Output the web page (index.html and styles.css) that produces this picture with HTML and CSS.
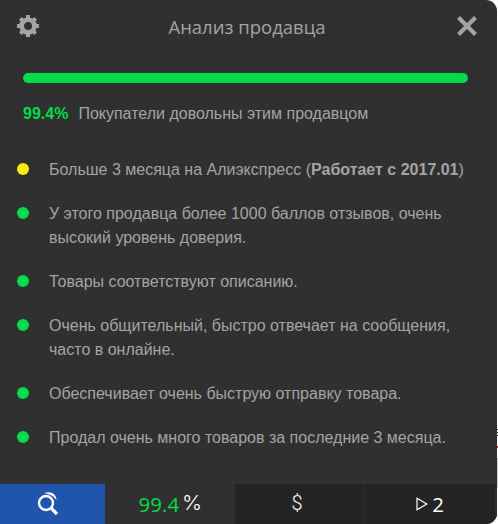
FILE: index.html
```html
<!DOCTYPE html>
<html lang="ru">
<head>
    <meta charset="UTF-8">
    <meta name="viewport" content="width=device-width, initial-scale=1.0">
    <title>Анализ продавца</title>
    <link rel="stylesheet" href="styles.css">
</head>
<body>
    <div class="popup">
        <div class="header">
            <svg class="icon-gear" viewBox="0 0 22 22">
                <circle cx="11" cy="11" r="6.4" fill="none" stroke="currentColor" stroke-width="4.8"/>
                <path d="M9 0h4v4H9zM9 18h4v4H9zM0 9h4v4H0zM18 9h4v4h-4z"/>
                <path d="M9 .2h4v4H9zM9 17.8h4v4H9zM.2 9h4v4h-4zM17.8 9h4v4h-4z" transform="rotate(45 11 11)"/>
            </svg>
            <h1>Анализ продавца</h1>
            <svg class="icon-close" viewBox="0 0 20 20"><path d="M1.5 1.5l17 17M18.5 1.5l-17 17"/></svg>
        </div>
        <div class="content">
            <div class="progress"></div>
            <p class="rating"><b>99.4%</b><span>Покупатели довольны этим продавцом</span></p>
            <ul class="list">
                <li class="warn">Больше 3 месяца на Алиэкспресс (<b>Работает с 2017.01</b>)</li>
                <li>У этого продавца более 1000 баллов отзывов, очень высокий уровень доверия.</li>
                <li>Товары соответствуют описанию.</li>
                <li>Очень общительный, быстро отвечает на сообщения, часто в онлайне.</li>
                <li>Обеспечивает очень быструю отправку товара.</li>
                <li>Продал очень много товаров за последние 3 месяца.</li>
            </ul>
        </div>
        <div class="tabs">
            <div class="tab tab-search">
                <svg class="icon-search" viewBox="0 0 22 26">
                    <circle cx="9" cy="12" r="7" stroke-width="2.4"/>
                    <path d="M14 17l6 6" stroke-width="3.2"/>
                    <path class="shine" d="M7 2.3C13-.4 19.3 2.5 19.5 9.3 16.8 5 13 3 7 2.3z"/>
                </svg>
            </div>
            <div class="tab tab-rating"><span class="value">99.4</span><span class="percent">%</span></div>
            <div class="tab tab-price"><span class="currency">$</span></div>
            <div class="tab tab-video">
                <svg class="icon-play" viewBox="0 0 12 14"><path d="M1 1.2v11.6L10.8 7z"/></svg>
                <span>2</span>
            </div>
        </div>
    </div>
    <div class="page-edge"></div>
</body>
</html>
```
FILE: styles.css
```css
* { margin: 0; padding: 0; box-sizing: border-box; }
body {
    display: flex;
    width: 498px;
    height: 524px;
    overflow: hidden;
    background: #fff;
    color: #a4a4a4;
    font: 16px/24px "Liberation Sans", Arial, sans-serif;
}
.popup {
    display: flex;
    flex-direction: column;
    width: 497px;
    height: 524px;
    background: #303030;
    border-radius: 0 11px 11px 0;
    overflow: hidden;
}
.header {
    display: flex;
    align-items: center;
    justify-content: space-between;
    height: 52px;
    padding: 0 20px 0 17px;
}
.header h1 {
    font: 400 18.5px/26px "Open Sans", "Noto Sans", sans-serif;
    padding: 2px 2px 0 0;
}
.icon-gear { width: 22px; height: 22px; fill: currentColor; }
.icon-close { width: 20px; height: 20px; fill: none; stroke: currentColor; stroke-width: 4.2; }
.content { flex: 1; padding: 21px 28px 0 17px; }
.progress {
    height: 10px;
    margin: 0 1px 0 6px;
    border-radius: 5px;
    background: #00dc4a;
}
.rating { display: flex; gap: 10px; margin: 19px 0 32px 6px; }
.rating b { color: #00dc4a; }
.list { list-style: none; }
.list li {
    position: relative;
    padding-left: 32px;
    margin-bottom: 20px;
}
.list li::before {
    content: "";
    position: absolute;
    left: 0;
    top: 5px;
    width: 12px;
    height: 12px;
    border-radius: 50%;
    background: #00dc4a;
}
.list .warn { white-space: nowrap; }
.list .warn::before { background: #ffec00; }
.tabs {
    display: grid;
    grid-template-columns: 105px 130px 129px 133px;
    height: 40px;
    color: #fff;
}
.tab {
    display: flex;
    align-items: center;
    justify-content: center;
    background: #242424;
}
.tab svg { fill: none; stroke: currentColor; }
.tab-search { background: #2055ad; padding-right: 9px; }
.tab-rating {
    gap: 4px;
    background: #303030;
    font: 20.5px/28px "Open Sans", "Noto Sans", sans-serif;
}
.value { color: #00dc4a; }
.percent { font: 300 19.5px/28px Inter, sans-serif; padding-bottom: 2px; transform: scaleX(1.1); }
.tab-price { padding-right: 5px; }
.currency { font: 300 20px/28px Roboto, sans-serif; padding-bottom: 2px; }
.tab-video {
    gap: 4px;
    border-left: 1px solid #303030;
    border-right: 2px solid #2d2d2d;
    font: 20.5px/28px "Open Sans", "Noto Sans", sans-serif;
}
.icon-search { width: 22px; height: 26px; }
.icon-search .shine { fill: currentColor; stroke: none; }
.icon-play { width: 12px; height: 14px; stroke-width: 1.2; margin-bottom: 1px; }
/* strip of the page visible next to the popup */
.page-edge {
    width: 1px;
    height: 524px;
    background: linear-gradient(#fff 429px, #222 429px 430px, #fff 430px 432px, #222 432px 433px, #fff 433px 435px, #222 435px 436px, #fff 436px 446px, #d52b10 446px 448px, #fff 448px 458px, #ccc 458px 488px, #fff 488px);
}
```
